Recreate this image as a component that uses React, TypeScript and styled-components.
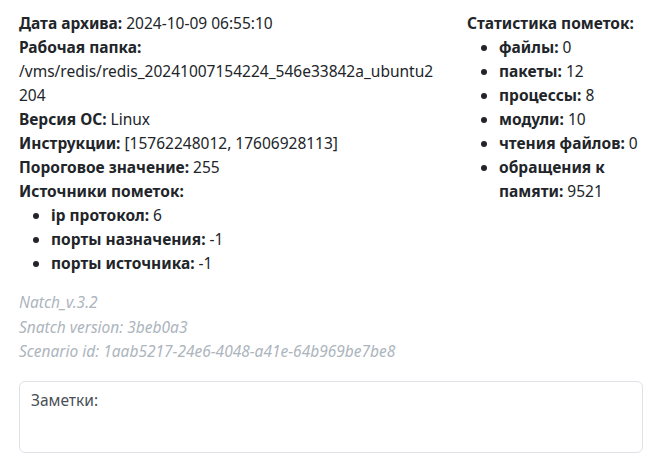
import React from "react";
import styled, { createGlobalStyle } from "styled-components";

const GlobalStyle = createGlobalStyle`
  body {
    margin: 0;
    font-family: "Noto Sans", "Open Sans", sans-serif;
    font-size: 15.5px;
    line-height: 24px;
    color: #212529;
    background: #fff;
  }
`;

const Page = styled.div`
  padding: 11px 14px 8px 19px;
`;

const Columns = styled.div`
  display: grid;
  grid-template-columns: 416px 1fr;
  column-gap: 32px;
`;

const Column = styled.div`
  min-width: 0;
`;

const Line = styled.div``;

const Path = styled.div`
  word-break: break-all;
`;

const Label = styled.b`
  font-weight: 700;
`;

const List = styled.ul`
  margin: 0;
  padding-left: 2rem;
`;

const Versions = styled.div`
  margin-top: 15px;
  color: #adb5bd;
  font-style: italic;
  line-height: 24.5px;
`;

const Notes = styled.textarea`
  display: block;
  box-sizing: border-box;
  width: 100%;
  height: 72px;
  margin-top: 17px;
  padding: 6px 11px;
  border: 1px solid #dee2e6;
  border-radius: 6px;
  font: inherit;
  color: #212529;
  resize: none;

  &::placeholder {
    color: #495057;
  }
`;

const flagSources = [
  ["ip протокол", "6"],
  ["порты назначения", "-1"],
  ["порты источника", "-1"],
];

const stats = [
  ["файлы", "0"],
  ["пакеты", "12"],
  ["процессы", "8"],
  ["модули", "10"],
  ["чтения файлов", "0"],
  ["обращения к памяти", "9521"],
];

export default function App() {
  return (
    <>
      <GlobalStyle />
      <Page>
        <Columns>
          <Column>
            <Line>
              <Label>Дата архива:</Label> 2024-10-09 06:55:10
            </Line>
            <Line>
              <Label>Рабочая папка:</Label>
            </Line>
            <Path>/vms/redis/redis_20241007154224_546e33842a_ubuntu2204</Path>
            <Line>
              <Label>Версия ОС:</Label> Linux
            </Line>
            <Line>
              <Label>Инструкции:</Label> [15762248012, 17606928113]
            </Line>
            <Line>
              <Label>Пороговое значение:</Label> 255
            </Line>
            <Line>
              <Label>Источники пометок:</Label>
            </Line>
            <List>
              {flagSources.map(([k, v]) => (
                <li key={k}>
                  <Label>{k}:</Label> {v}
                </li>
              ))}
            </List>
          </Column>
          <Column>
            <Line>
              <Label>Статистика пометок:</Label>
            </Line>
            <List>
              {stats.map(([k, v]) => (
                <li key={k}>
                  <Label>{k}:</Label> {v}
                </li>
              ))}
            </List>
          </Column>
        </Columns>
        <Versions>
          <Line>Natch_v.3.2</Line>
          <Line>Snatch version: 3beb0a3</Line>
          <Line>Scenario id: 1aab5217-24e6-4048-a41e-64b969be7be8</Line>
        </Versions>
        <Notes placeholder="Заметки:" />
      </Page>
    </>
  );
}
